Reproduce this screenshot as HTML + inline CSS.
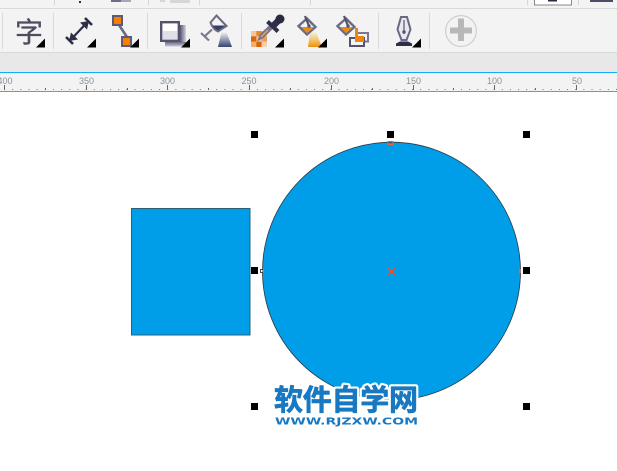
<!DOCTYPE html>
<html>
<head>
<meta charset="utf-8">
<style>
html,body{margin:0;padding:0;width:617px;height:471px;overflow:hidden;background:#fff}
svg{position:absolute;left:0;top:0;display:block}
.r{font-family:"Liberation Sans",sans-serif;font-size:9px;fill:#87919c;text-anchor:middle}
</style>
</head>
<body>
<svg width="617" height="471" viewBox="0 0 617 471" xmlns="http://www.w3.org/2000/svg">
<defs>
<pattern id="tk" x="4" y="0" width="8.16" height="92" patternUnits="userSpaceOnUse"><rect x="0" y="89" width="1" height="1" fill="#777"/></pattern>
<linearGradient id="sh" x1="0" y1="0" x2="0" y2="1"><stop offset="0" stop-color="#55536f"/><stop offset="1" stop-color="#c9c9d8"/></linearGradient>
<linearGradient id="sh2" x1="0" y1="0" x2="1" y2="0"><stop offset="0" stop-color="#55536f"/><stop offset="1" stop-color="#d5d5e0"/></linearGradient>
<linearGradient id="tr" x1="0" y1="0" x2="0" y2="1"><stop offset="0" stop-color="#f3f3f3"/><stop offset="1" stop-color="#34446f"/></linearGradient>
<linearGradient id="og" x1="0" y1="0" x2="0" y2="1"><stop offset="0" stop-color="#f6f0e2"/><stop offset=".5" stop-color="#f2c874"/><stop offset="1" stop-color="#ee8f10"/></linearGradient>
</defs>

<!-- chrome -->
<rect width="617" height="52" fill="#f3f3f3"/>
<rect y="8" width="617" height="1" fill="#d9d9d9"/>
<rect y="52" width="617" height="1" fill="#d9d9d9"/>
<rect y="53" width="617" height="19" fill="#e8e8e8"/>
<rect y="72" width="617" height="1" fill="#12aef5"/>
<rect y="73" width="617" height="18" fill="#f3f3f3"/>
<rect y="91" width="617" height="1" fill="#8f8f8f"/>

<!-- top strip fragments -->
<g fill="#d6d6d6">
<rect x="54" y="0" width="1" height="5"/><rect x="148" y="0" width="1" height="5"/><rect x="199" y="0" width="1" height="5"/><rect x="310" y="0" width="1" height="5"/><rect x="527" y="0" width="1" height="5"/><rect x="578" y="0" width="1" height="5"/>
<rect x="160" y="0" width="5" height="2"/><rect x="170" y="0" width="20" height="3"/>
</g>
<rect x="79" y="1" width="2" height="2" fill="#2a2a40"/>
<rect x="111" y="0" width="10" height="2" fill="#6f6d85"/><rect x="121" y="0" width="10" height="2" fill="#a6a5bd"/>
<rect x="534.500" y="-2" width="37" height="7" fill="#fff" stroke="#8a8a8a"/>
<rect x="548" y="0" width="9" height="1.500" fill="#2a2a40"/>
<rect x="590" y="0" width="23" height="2" fill="#4f4d66"/>

<!-- separators -->
<g fill="#d9d9d9">
<rect x="2" y="13" width="1" height="36"/><rect x="53" y="13" width="1" height="36"/><rect x="147" y="13" width="1" height="36"/><rect x="241" y="13" width="1" height="36"/><rect x="378" y="13" width="1" height="36"/><rect x="429" y="13" width="1" height="36"/>
</g>

<!-- text tool -->
<text x="15" y="42" font-family="'Noto Sans CJK SC',sans-serif" font-size="28" fill="#4e4c5e" stroke="#4e4c5e" stroke-width=".3">字</text>

<!-- dimension -->
<g stroke="#2e2e46" fill="none" stroke-linecap="butt">
<path d="M66 37L73 44M85 18L92 25" stroke-width="2.600"/>
<path d="M71 39.500L87 22.500" stroke-width="2.200"/>
</g>
<path d="M69 41L78 39.500L71 32.500ZM89 21L80 22.500L87 29.500Z" fill="#2e2e46"/>

<!-- connector -->
<path d="M119 25L127 37" stroke="#6c6a82" stroke-width="2.600"/>
<rect x="112" y="15" width="11" height="11" fill="#5c5a74"/><rect x="114" y="17" width="7" height="7" fill="#f77f00"/>
<rect x="121" y="36" width="11" height="11" fill="#5c5a74"/><rect x="123" y="38" width="7" height="7" fill="#f77f00"/>

<!-- drop shadow -->
<rect x="165" y="41" width="21" height="5.500" fill="url(#sh)"/>
<rect x="180" y="25" width="6" height="17" fill="url(#sh2)"/>
<rect x="161.200" y="22.200" width="17.600" height="18.600" fill="#fff" stroke="#55536b" stroke-width="2.400"/>
<rect x="162.400" y="31" width="15.200" height="8.600" fill="#dfdfe8"/>

<!-- transparency -->
<path d="M221.500 32H226.500L232 47H218Z" fill="url(#tr)"/>
<path d="M210.500 22.500L216.500 15.500L226.500 26L218 31.500C214.500 30 212 26.500 210.500 22.500Z" fill="#f3f3f3" stroke="#6d6b82" stroke-width="2"/>
<path d="M212.500 25.500H225.500L218 30.500C215.500 29.500 213.800 27.500 212.500 25.500Z" fill="#33406b"/>
<path d="M212 29.500L204.500 36.500M201 33L209 40.500" stroke="#7a788e" stroke-width="2.200" fill="none"/>

<!-- eyedropper -->
<g>
<rect x="251" y="31" width="16" height="16" fill="#f2c69c"/>
<rect x="256.330" y="31" width="5.340" height="5.340" fill="#e58a2a"/>
<rect x="251" y="36.330" width="5.340" height="5.340" fill="#d9650a"/>
<rect x="261.670" y="36.330" width="5.330" height="5.340" fill="#e8a060"/>
<rect x="251" y="41.670" width="5.340" height="5.330" fill="#f0b070"/>
<rect x="256.330" y="41.670" width="5.340" height="5.330" fill="#d9650a"/>
<rect x="261.670" y="41.670" width="5.330" height="5.330" fill="#f4d0b0"/>
<path d="M257 41.500L260 34L269 25.500L272.500 29L263.500 38Z" fill="#77758c"/>
<path d="M261 37L268 30" stroke="#e8a15a" stroke-width="1.500"/>
<path d="M267.500 21.500L278 31.500" stroke="#2e2e46" stroke-width="4"/>
<path d="M272 27L279 20" stroke="#2e2e46" stroke-width="6.500"/>
<circle cx="280" cy="19" r="4.500" fill="#2a2a40"/>
</g>

<!-- fountain fill -->
<path d="M310 32H316L322 47H308Z" fill="url(#og)"/>
<path d="M298.500 26L307 18.500L315.500 27L307 34.500Z" fill="#f3f3f3" stroke="#6d6b82" stroke-width="2.400"/>
<path d="M301 27H313.500L307 33Z" fill="#ef8a10"/>
<path d="M305 16L309 26" stroke="#55536b" stroke-width="2.200"/>
<circle cx="309" cy="26" r="1.700" fill="#55536b"/>

<!-- copy fill -->
<path d="M337.500 26L346 18.500L354.500 27L346 34.500Z" fill="#f3f3f3" stroke="#6d6b82" stroke-width="2.400"/>
<path d="M340 27H352.500L346 33Z" fill="#ef8a10"/>
<path d="M344 16L348 26" stroke="#55536b" stroke-width="2.200"/>
<circle cx="348" cy="26" r="1.700" fill="#55536b"/>
<rect x="356" y="33" width="12" height="8.500" fill="none" stroke="#7a788e" stroke-width="2"/>
<rect x="350" y="38" width="14" height="8" fill="#f3f3f3" stroke="#55536b" stroke-width="2"/>
<path d="M355 28H358V36H364V42H355Z" fill="#ee8510"/>

<!-- pen nib -->
<path d="M396 46V43.500L400 41.500H408L412 43.500V46Z" fill="#2e2e46"/>
<path d="M401 17H407L410.500 29.500L406.500 40H401.500L397.500 29.500Z" fill="#e9e9f0" stroke="#6a6884" stroke-width="2"/>
<path d="M404 20V34" stroke="#55536b" stroke-width="1.200"/>
<circle cx="404" cy="32" r="1.700" fill="#55536b"/>

<!-- corner triangles -->
<g fill="#000">
<path d="M36 47.500H45V38.500Z"/><path d="M87 47.500H96V38.500Z"/><path d="M130 47.500H139V38.500Z"/><path d="M181 47.500H190V38.500Z"/><path d="M275 47.500H284V38.500Z"/><path d="M318 47.500H327V38.500Z"/><path d="M412 47.500H421V38.500Z"/>
</g>

<!-- add -->
<circle cx="461" cy="31" r="15.400" fill="#f3f3f3" stroke="#cfcfcf" stroke-width="1.200"/>
<path d="M450 30.500H472" stroke="#b8b8b8" stroke-width="6"/>
<path d="M461 18.500V41" stroke="#b8b8b8" stroke-width="6"/>

<!-- ruler -->
<rect x="0" y="84" width="617" height="7" fill="url(#tk)"/>
<g fill="#666">
<rect x="4" y="85" width="1" height="5"/><rect x="86" y="85" width="1" height="5"/><rect x="167" y="85" width="1" height="5"/><rect x="249" y="85" width="1" height="5"/><rect x="331" y="85" width="1" height="5"/><rect x="413" y="85" width="1" height="5"/><rect x="494" y="85" width="1" height="5"/><rect x="576" y="85" width="1" height="5"/>
<rect x="45" y="88" width="1" height="2"/><rect x="127" y="88" width="1" height="2"/><rect x="208" y="88" width="1" height="2"/><rect x="290" y="88" width="1" height="2"/><rect x="372" y="88" width="1" height="2"/><rect x="453" y="88" width="1" height="2"/><rect x="535" y="88" width="1" height="2"/>
</g>
<text class="r" x="5" y="84">400</text>
<text class="r" x="86.500" y="84">350</text>
<text class="r" x="167.500" y="84">300</text>
<text class="r" x="249" y="84">250</text>
<text class="r" x="331.500" y="84">200</text>
<text class="r" x="413.500" y="84">150</text>
<text class="r" x="494.500" y="84">100</text>
<text class="r" x="577" y="84">50</text>

<!-- canvas shapes -->
<rect x="131.500" y="208.500" width="118.500" height="126.500" fill="#009ee8" stroke="#2b5f78" stroke-width="1"/>
<circle cx="391.500" cy="271.200" r="129" fill="#009ee8" stroke="#2a3a45" stroke-width=".8"/>

<!-- handles -->
<g fill="#000">
<rect x="251" y="131" width="7" height="7"/><rect x="387" y="131" width="7" height="7"/><rect x="523" y="131" width="7" height="7"/>
<rect x="251" y="267" width="7" height="7"/><rect x="523" y="267" width="7" height="7"/>
<rect x="251" y="403" width="7" height="7"/><rect x="523" y="403" width="7" height="7"/>
</g>

<!-- nodes -->
<rect x="388" y="141.500" width="5" height="3" fill="none" stroke="#f0633a" stroke-width="1"/>
<rect x="260.500" y="269.500" width="2.500" height="3" fill="#fff" stroke="#222" stroke-width=".8"/>
<rect x="263" y="269" width="1" height="4" fill="#f0633a"/>
<rect x="519" y="269" width="2" height="4" fill="#f0633a"/>
<path d="M387.500 268L395 275M395 268L387.500 275" stroke="#f0502a" stroke-width="1.200"/>

<!-- watermark -->
<g font-weight="700" stroke-linejoin="round">
<g font-family="'Liberation Sans','Noto Sans CJK SC',sans-serif">
<text x="274" y="410" font-size="29" fill="#fff" stroke="#fff" stroke-width="5" textLength="144" lengthAdjust="spacing">软件自学网</text>
<text x="274" y="410" font-size="29" fill="#1878c2" stroke="#1878c2" stroke-width=".7" textLength="144" lengthAdjust="spacing">软件自学网</text>
</g>
<g font-family="'DejaVu Sans',sans-serif">
<text x="275" y="424.500" font-size="10" fill="#fff" stroke="#fff" stroke-width="3" textLength="143" lengthAdjust="spacingAndGlyphs">WWW.RJZXW.COM</text>
<text x="275" y="424.500" font-size="10" fill="#1878c2" textLength="143" lengthAdjust="spacingAndGlyphs">WWW.RJZXW.COM</text>
</g>
</g>
</svg>
</body>
</html>
